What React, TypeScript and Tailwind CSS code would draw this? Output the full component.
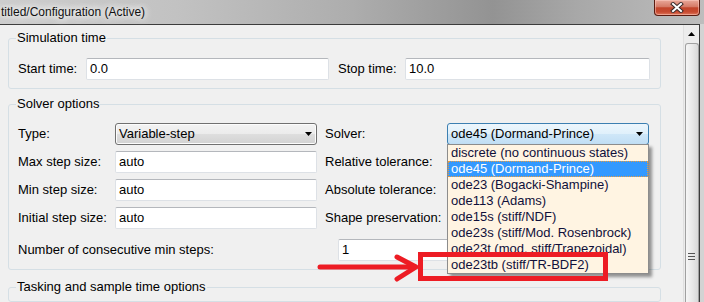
const solvers = [
  "discrete (no continuous states)",
  "ode45 (Dormand-Prince)",
  "ode23 (Bogacki-Shampine)",
  "ode113 (Adams)",
  "ode15s (stiff/NDF)",
  "ode23s (stiff/Mod. Rosenbrock)",
  "ode23t (mod. stiff/Trapezoidal)",
  "ode23tb (stiff/TR-BDF2)",
];

function DownArrow() {
  return (
    <svg width="7" height="4" viewBox="0 0 7 4">
      <polygon points="0,0 7,0 3.5,4" fill="#000" />
    </svg>
  );
}

function TextField({ value = "", className = "" }: { value?: string; className?: string }) {
  return (
    <div
      className={`h-[22px] flex items-center pl-[3px] bg-white border border-[#dde1e6] border-t-[#b4b7bc] rounded-[2px] ${className}`}
    >
      {value}
    </div>
  );
}

function SelectBox({ value = "", className = "" }: { value?: string; className?: string }) {
  return (
    <div
      className={`h-[22px] flex items-center justify-between pl-[3px] pr-[4px] rounded-[3px] border border-[#707070] bg-[linear-gradient(#f3f3f3,#ebebeb_50%,#dedede_50%,#d2d2d2)] shadow-[inset_0_0_0_1px_#fcfcfc] ${className}`}
    >
      <span>{value}</span>
      <DownArrow />
    </div>
  );
}

function Group({ title, className = "", children }: { title: string; className?: string; children?: React.ReactNode }) {
  return (
    <fieldset className={`w-[653px] border border-[#d5dfe5] rounded-[3px] px-[9px] ${className}`}>
      <legend className="-ml-[2px] px-[1px] leading-[16px]">{title}</legend>
      {children}
    </fieldset>
  );
}

function SolverSelect() {
  return (
    <div className="relative w-[202px]">
      <div className="h-[22px] flex items-center justify-between pl-[3px] pr-[5px] rounded-[3px] border border-[#3c7fb1] bg-[linear-gradient(#edf6fc,#dff0fb_50%,#cfe7f8_50%,#c0def4)]">
        <span>ode45 (Dormand-Prince)</span>
        <DownArrow />
      </div>
      <ul className="absolute left-0 top-[21px] z-20 w-[202px] bg-[#fff4e2] border border-[#8c8c8c] shadow-[3px_3px_3px_rgba(0,0,0,0.4)] text-[#10103a]">
        {solvers.map((s, i) => (
          <li
            key={s}
            className={
              i === 1
                ? "h-[16px] leading-[16px] pl-[3px] bg-[#3399ff] text-white outline-1 outline-dotted outline-[#e89a3c] -outline-offset-1"
                : "h-[16px] leading-[16px] pl-[3px]"
            }
          >
            {s}
          </li>
        ))}
      </ul>
    </div>
  );
}

export default function App() {
  return (
    <div className="relative w-[704px] h-[302px] overflow-hidden bg-[#d3d3d3] font-['Liberation_Sans',Arial,sans-serif] text-[13px] text-black">
      {/* title bar */}
      <div className="h-[24px] flex items-start bg-[linear-gradient(90deg,#cdcdcd_0%,#c2c2c2_25%,#adadad_50%,#939393_70%,#a8a8a8_82%,#bdbdbd_100%)]">
        <span className="pl-[1px] pt-[5px] text-[12px] leading-[14px] text-[#111] [text-shadow:0_0_6px_#fff,0_0_10px_#fff,0_0_12px_#fff]">
          titled/Configuration (Active)
        </span>
        <div className="ml-auto mr-[4px] w-[46px] h-[16px] flex items-center justify-center rounded-b-[4px] border border-t-0 border-[#5a1b10] bg-[linear-gradient(#e9a89a,#d57a66_45%,#c2452b_52%,#c84b31_80%,#df7a5f)] shadow-[inset_0_0_0_1px_rgba(255,210,200,0.5)]">
          <svg width="14" height="11" viewBox="0 0 14 11">
            <path d="M3 2 L11 9 M11 2 L3 9" stroke="#3a2a2a" strokeWidth="4" strokeLinecap="square" />
            <path d="M3 2 L11 9 M11 2 L3 9" stroke="#fff" strokeWidth="2" strokeLinecap="square" />
          </svg>
        </div>
      </div>

      {/* window body */}
      <div className="flex w-[700px] h-[278px] border-t border-r border-[#3c3c3c]">
        <div className="w-[683px] bg-[#f0f0f0] pl-[8px] pt-[5px] flex flex-col">
          <Group title="Simulation time" className="pt-[12px] pb-[8px]">
            <div className="flex items-center h-[22px]">
              <span className="w-[68px]">Start time:</span>
              <TextField value="0.0" className="w-[243px]" />
              <span className="ml-[9px] w-[67px]">Stop time:</span>
              <TextField value="10.0" className="w-[245px]" />
            </div>
          </Group>

          <Group title="Solver options" className="mt-[7px] pt-[11px] pb-[8px]">
            <div className="flex flex-col gap-[6px]">
              <div className="flex items-center h-[22px]">
                <span className="w-[97px]">Type:</span>
                <SelectBox value="Variable-step" className="w-[202px]" />
                <span className="ml-[8px] w-[122px]">Solver:</span>
                <SolverSelect />
              </div>
              <div className="flex items-center h-[22px]">
                <span className="w-[97px]">Max step size:</span>
                <TextField value="auto" className="w-[202px]" />
                <span className="ml-[8px] w-[122px]">Relative tolerance:</span>
                <TextField className="w-[202px]" />
              </div>
              <div className="flex items-center h-[22px]">
                <span className="w-[97px]">Min step size:</span>
                <TextField value="auto" className="w-[202px]" />
                <span className="ml-[8px] w-[122px]">Absolute tolerance:</span>
                <TextField className="w-[202px]" />
              </div>
              <div className="flex items-center h-[22px]">
                <span className="w-[97px]">Initial step size:</span>
                <TextField value="auto" className="w-[202px]" />
                <span className="ml-[8px] w-[122px]">Shape preservation:</span>
                <SelectBox className="w-[202px]" />
              </div>
            </div>
            <div className="flex items-center h-[22px] mt-[10px]">
              <span className="w-[320px]">Number of consecutive min steps:</span>
              <TextField value="1" className="w-[311px]" />
            </div>
          </Group>

          <Group title="Tasking and sample time options" className="mt-[9px] h-[60px]" />
        </div>

        {/* scrollbar */}
        <div className="w-[16px] flex flex-col items-center bg-[#ececec] border-l border-[#e0e0e0]">
          <div className="h-[18px] flex items-center justify-center">
            <svg width="7" height="4" viewBox="0 0 7 4">
              <polygon points="0,4 7,4 3.5,0" fill="#000" />
            </svg>
          </div>
          <div className="flex-1 w-[14px] rounded-t-[3px] border border-b-0 border-[#a0a0a0] bg-[linear-gradient(90deg,#f6f6f6,#e6e6e6_60%,#d8d8d8)] flex flex-col items-center pt-[209px] gap-[2px]">
            <div className="w-[7px] h-px bg-[#555]" />
            <div className="w-[7px] h-px bg-[#555]" />
            <div className="w-[7px] h-px bg-[#555]" />
          </div>
        </div>
      </div>

      {/* red annotation */}
      <svg className="absolute left-0 top-0 z-30 pointer-events-none" width="704" height="302" viewBox="0 0 704 302">
        <rect x="420.5" y="254.5" width="185" height="24" fill="none" stroke="#ed1c24" strokeWidth="5" />
        <path d="M320 267 L414 267" stroke="#ed1c24" strokeWidth="5" strokeLinecap="round" />
        <path d="M397 257 L416 267 L397 279" fill="none" stroke="#ed1c24" strokeWidth="5" strokeLinecap="round" strokeLinejoin="round" />
      </svg>
    </div>
  );
}
